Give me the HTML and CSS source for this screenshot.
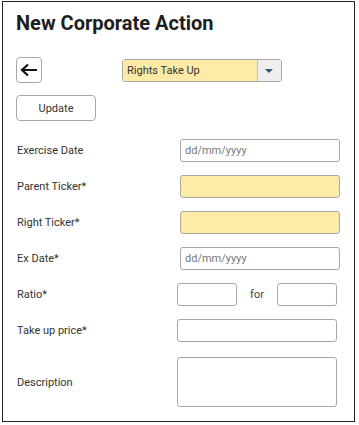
FILE: index.html
```html
<!DOCTYPE html>
<html lang="en">
<head>
    <meta charset="UTF-8">
    <meta name="viewport" content="width=device-width, initial-scale=1.0">
    <title>New Corporate Action</title>
    <link rel="stylesheet" href="styles.css">
</head>
<body>

    <div class="panel">
        <h1>New Corporate Action</h1>

        <!-- Back + action type -->
        <div class="toolbar">
            <button class="back-btn" title="Back">
                <svg width="18" height="14" viewBox="0 0 18 14">
                    <path d="M17 7H2.5M8 1.5L2 7l6 5.5" fill="none" stroke="#111" stroke-width="2.2"/>
                </svg>
            </button>
            <div class="select">
                <span class="select-value">Rights Take Up</span>
                <span class="select-arrow"></span>
            </div>
        </div>

        <button class="update-btn">Update</button>

        <!-- Form fields -->
        <div class="form">
            <div class="row">
                <label>Exercise Date</label>
                <input type="text" class="field" placeholder="dd/mm/yyyy">
            </div>
            <div class="row">
                <label>Parent Ticker*</label>
                <input type="text" class="field required">
            </div>
            <div class="row">
                <label>Right Ticker*</label>
                <input type="text" class="field required">
            </div>
            <div class="row">
                <label>Ex Date*</label>
                <input type="text" class="field" placeholder="dd/mm/yyyy">
            </div>
            <div class="row row-alt">
                <label>Ratio*</label>
                <div class="ratio">
                    <input type="text" class="field small">
                    <span>for</span>
                    <input type="text" class="field small">
                </div>
            </div>
            <div class="row row-alt">
                <label>Take up price*</label>
                <input type="text" class="field">
            </div>
            <div class="row row-alt row-desc">
                <label>Description</label>
                <textarea class="field area"></textarea>
            </div>
        </div>
    </div>

</body>
</html>
```

FILE: styles.css
```css
body {
    margin: 0;
    font-family: Roboto, Arial, sans-serif;
    color: #333;
    background: #fff;
}
.panel {
    margin: 1px 0 0 2px;
    width: 338px;
    height: 410px;
    border: 1px solid #222;
    padding: 9px 0 0 13px;
    box-sizing: content-box;
}
.panel h1 {
    margin: 0;
    font-size: 20px;
    line-height: 24px;
    font-weight: bold;
    color: #1e1e1e;
}
.toolbar {
    display: flex;
    align-items: center;
    margin-top: 22px;
    height: 26px;
}
button {
    font-family: Roboto, Arial, sans-serif;
    background: #fff;
    border: 1px solid #a8a8a8;
    border-radius: 4px;
    cursor: pointer;
    padding: 0;
}
.back-btn {
    width: 26px;
    height: 26px;
    display: flex;
    align-items: center;
    justify-content: center;
}
.select {
    margin-left: 80px;
    width: 160px;
    height: 23px;
    box-sizing: border-box;
    border: 1px solid #a8a8a8;
    border-radius: 3px;
    display: flex;
    overflow: hidden;
}
.select-value {
    flex: 1;
    background: #ffeba8;
    font-size: 11px;
    line-height: 21px;
    padding-left: 4px;
    color: #333;
}
.select-arrow {
    width: 23px;
    background: #eee;
    border-left: 1px solid #c4c4c4;
    position: relative;
}
.select-arrow::after {
    content: "";
    position: absolute;
    left: 7px;
    top: 9px;
    border-left: 4px solid transparent;
    border-right: 4px solid transparent;
    border-top: 4px solid #2b5d70;
}
.update-btn {
    margin-top: 12px;
    width: 80px;
    height: 26px;
    font-size: 11px;
    color: #333;
}
.form {
    margin-top: 18px;
    display: flex;
    flex-direction: column;
    gap: 13px;
}
.row {
    display: flex;
    align-items: center;
}
.row label {
    width: 163px;
    padding-left: 1px;
    font-size: 11px;
    color: #333;
}
.row-alt label {
    width: 160px;
}
.row-desc {
    margin-top: 2px;
}
.field {
    width: 160px;
    height: 23px;
    box-sizing: border-box;
    border: 1px solid #a8a8a8;
    border-radius: 3px;
    background: #fff;
    font-family: Roboto, Arial, sans-serif;
    font-size: 11px;
    padding: 0 4px;
    color: #333;
    margin: 0;
}
.field::placeholder {
    color: #777;
}
.field.required {
    background: #ffeba8;
}
.ratio {
    width: 160px;
    display: flex;
    justify-content: space-between;
    align-items: center;
    font-size: 11px;
    color: #444;
}
.field.small {
    width: 60px;
}
.field.area {
    height: 50px;
    resize: none;
}
```
